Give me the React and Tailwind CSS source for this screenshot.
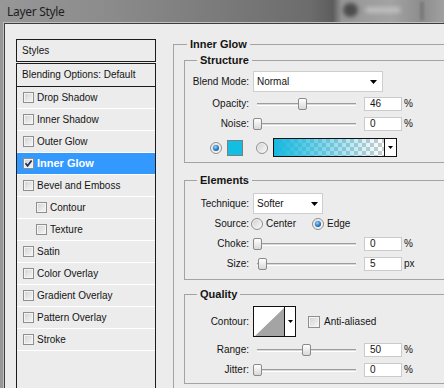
import React from "react";

const items = [
  { t: "Drop Shadow" },
  { t: "Inner Shadow" },
  { t: "Outer Glow" },
  { t: "Inner Glow", sel: true },
  { t: "Bevel and Emboss" },
  { t: "Contour", ind: true },
  { t: "Texture", ind: true },
  { t: "Satin" },
  { t: "Color Overlay" },
  { t: "Gradient Overlay" },
  { t: "Pattern Overlay" },
  { t: "Stroke" },
];

function Arrow({ small }) {
  if (small) {
    return (
      <svg width="5" height="3" viewBox="0 0 5 3" className="block shrink-0">
        <polygon points="0,0 5,0 2.5,3" fill="#000" />
      </svg>
    );
  }
  return (
    <svg width="7" height="4" viewBox="0 0 7 4" className="block shrink-0">
      <polygon points="0,0 7,0 3.5,4" fill="#000" />
    </svg>
  );
}

function CheckBox({ checked, big }) {
  return (
    <span
      className={`${big ? "w-[12px] h-[12px]" : "w-[11px] h-[11px]"} shrink-0 flex items-center justify-center border border-[#8e8f8f] bg-linear-to-br from-[#d2d2d2] to-[#f8f8f8] shadow-[inset_0_0_0_1px_#f4f4f4]`}
    >
      {checked && (
        <svg width="9" height="9" viewBox="0 0 9 9" className="block">
          <path d="M1.5 4.3 L3.6 6.8 L7.6 1.4" fill="none" stroke="#1f2d55" strokeWidth="1.7" />
        </svg>
      )}
    </span>
  );
}

function Radio({ on }) {
  return (
    <span className="w-[12px] h-[12px] shrink-0 rounded-full flex items-center justify-center border border-[#8e8f8f] bg-linear-to-br from-[#cfcfcf] to-[#fbfbfb] shadow-[inset_0_0_0_1px_#f4f4f4]">
      {on && (
        <span className="w-[6px] h-[6px] rounded-full bg-[image:radial-gradient(circle_at_40%_35%,#9ad6ff,#2b7fc4_50%,#0d3c68)]" />
      )}
    </span>
  );
}

function Slider({ frac }) {
  const left = Math.round(frac * 98);
  return (
    <div className="relative w-[107px] h-[12px] flex items-center shrink-0">
      <div className="mx-[4px] flex-1 h-[3px] border-t border-t-[#9d9d9d] bg-[#d9d9d9] border-b border-b-white" />
      <span
        className="absolute top-0 w-[9px] h-[12px] rounded-[2px] border border-[#8a8a8a] bg-linear-to-b from-white to-[#d8d8d8]"
        style={{ left }}
      />
    </div>
  );
}

function Label({ children }) {
  return <span className="w-[64px] shrink-0 text-right">{children}</span>;
}

function SliderRow({ label, frac, value, unit }) {
  return (
    <div className="flex items-center h-[20px]">
      <Label>{label}</Label>
      <div className="ml-[4px]">
        <Slider frac={frac} />
      </div>
      <div className="ml-[4px] w-[38px] h-[14px] shrink-0 border border-[#cbcbcb] bg-white pl-[5px] flex items-center">
        {value}
      </div>
      <span className="ml-[2px]">{unit}</span>
    </div>
  );
}

function Select({ wide, text }) {
  return (
    <div
      className={`${wide ? "w-[130px] pr-[5px]" : "w-[70px] pr-[4px]"} h-[21px] shrink-0 flex items-center border border-[#cdcdcd] bg-white pl-[3px]`}
    >
      <span className="flex-1">{text}</span>
      <Arrow />
    </div>
  );
}

function Group({ title, pl, className, children }) {
  return (
    <div className={`border-l border-t border-b border-[#a3a3a3] ${className}`}>
      <div className={`h-0 flex items-center ${pl}`}>
        <span className="bg-[#ececec] px-[3px] font-bold text-[11px] leading-[14px] mb-[3px]">{title}</span>
      </div>
      {children}
    </div>
  );
}

function LeftPanel() {
  return (
    <div className="w-[140px] shrink-0 flex flex-col">
      <div className="h-[23px] border border-[#1c1c1c] flex items-center pl-[5px]">Styles</div>
      <div className="mt-[1px] h-[340px] border border-[#1c1c1c] flex flex-col">
        <div className="h-[23px] shrink-0 border-b border-[#1c1c1c] flex items-center pl-[5px]">
          Blending Options: Default
        </div>
        {items.map((it) => (
          <div
            key={it.t}
            className={`h-[22px] shrink-0 border-b border-white flex items-center gap-[3px] ${it.ind ? "pl-[19px]" : "pl-[6px]"} ${it.sel ? "bg-[#3399ff] text-white font-bold text-[11px]" : ""}`}
          >
            <CheckBox checked={it.sel} />
            <span>{it.t}</span>
          </div>
        ))}
      </div>
    </div>
  );
}

function RightPanel() {
  return (
    <Group title="Inner Glow" pl="pl-[13px]" className="mt-[5px] ml-[17px] w-[290px] h-[360px] shrink-0">
      <div className="pl-[10px] pt-[15px] flex flex-col">
        <Group title="Structure" pl="pl-[12px]" className="w-[275px]">
          <div className="flex flex-col pt-[10px] pb-[5px]">
            <div className="flex items-center h-[21px]">
              <Label>Blend Mode:</Label>
              <div className="ml-[4px]">
                <Select wide text="Normal" />
              </div>
            </div>
            <div className="mt-[2px]">
              <SliderRow label="Opacity:" frac={0.46} value="46" unit="%" />
            </div>
            <SliderRow label="Noise:" frac={0} value="0" unit="%" />
            <div className="mt-[4px] h-[19px] flex items-center pl-[25px]">
              <Radio on />
              <span className="ml-[5px] w-[16px] h-[16px] shrink-0 border border-[#7d7d7d] bg-[#14bde2]" />
              <span className="ml-[13px]">
                <Radio />
              </span>
              <div className="ml-[5px] w-[124px] h-[19px] shrink-0 border border-[#111] flex">
                <div className="w-[110px] h-full bg-[image:repeating-conic-gradient(#cccccc_0_25%,#ffffff_0_50%)] bg-[length:8px_8px]">
                  <div className="w-full h-full bg-linear-to-r from-[#16b8e0] via-[#16b8e0]/50 to-[#16b8e0]/0" />
                </div>
                <div className="flex-1 border-l border-[#111] bg-white flex items-center justify-center">
                  <Arrow small />
                </div>
              </div>
            </div>
          </div>
        </Group>

        <Group title="Elements" pl="pl-[12px]" className="mt-[17px] w-[275px]">
          <div className="flex flex-col pt-[12px] pb-[5px]">
            <div className="flex items-center h-[21px]">
              <Label>Technique:</Label>
              <div className="ml-[4px]">
                <Select text="Softer" />
              </div>
            </div>
            <div className="flex items-center h-[20px]">
              <Label>Source:</Label>
              <div className="ml-[2px] w-[61px] flex items-center shrink-0">
                <Radio />
                <span className="ml-[3px]">Center</span>
              </div>
              <Radio on />
              <span className="ml-[3px]">Edge</span>
            </div>
            <SliderRow label="Choke:" frac={0} value="0" unit="%" />
            <SliderRow label="Size:" frac={0.055} value="5" unit="px" />
          </div>
        </Group>

        <Group title="Quality" pl="pl-[12px]" className="mt-[14px] w-[275px]">
          <div className="flex flex-col pt-[11px] pb-[3px]">
            <div className="flex items-center h-[31px]">
              <Label>Contour:</Label>
              <div className="ml-[4px] w-[43px] h-[31px] shrink-0 border border-[#111] flex bg-white">
                <div className="w-[30px] h-full flex items-end">
                  <svg width="30" height="29" viewBox="0 0 30 29" className="block">
                    <polygon points="1,29 30,1 30,29" fill="#a4a4a4" />
                  </svg>
                </div>
                <div className="flex-1 border-l border-[#111] flex items-center justify-center">
                  <Arrow small />
                </div>
              </div>
              <span className="ml-[12px]">
                <CheckBox big />
              </span>
              <span className="ml-[4px]">Anti-aliased</span>
            </div>
            <div className="mt-[3px]">
              <SliderRow label="Range:" frac={0.5} value="50" unit="%" />
            </div>
            <SliderRow label="Jitter:" frac={0} value="0" unit="%" />
          </div>
        </Group>
      </div>
    </Group>
  );
}

export default function App() {
  return (
    <div className="w-[444px] h-[388px] overflow-hidden flex flex-col bg-[linear-gradient(to_right,#979797_0%,#8b8b8b_25%,#7a7a7a_50%,#6c6c6c_70%,#5d5d5d_75%,#969696_77%,#a3a3a3_88%,#8d8d8d_95%,#a0a0a0_100%)]">
      <div className="relative h-[23px] shrink-0 flex items-center pl-[7px]">
        <span className="font-['Noto_Sans',sans-serif] text-[12px] tracking-[-0.3px] text-[#1e1e1e]">Layer Style</span>
        <span className="absolute left-[343px] top-[3px] w-[15px] h-[14px] rounded-full bg-[#4c4c4c] blur-[2px]" />
        <span className="absolute left-[366px] top-[7px] w-[34px] h-[6px] bg-[#bdbdbd] blur-[2px]" />
        <span className="absolute left-[420px] top-[2px] w-[4px] h-[18px] bg-[#7a7a7a] blur-[1px]" />
      </div>
      <div className="flex-1 ml-[4px] border-l border-t border-[#3d3d3d] shadow-[-1px_-1px_0_#c0c0c0] bg-[#ececec] flex pl-[11px] pt-[15px] font-['Liberation_Sans',Arial,sans-serif] text-[10px] leading-none text-[#141414]">
        <LeftPanel />
        <RightPanel />
      </div>
    </div>
  );
}
